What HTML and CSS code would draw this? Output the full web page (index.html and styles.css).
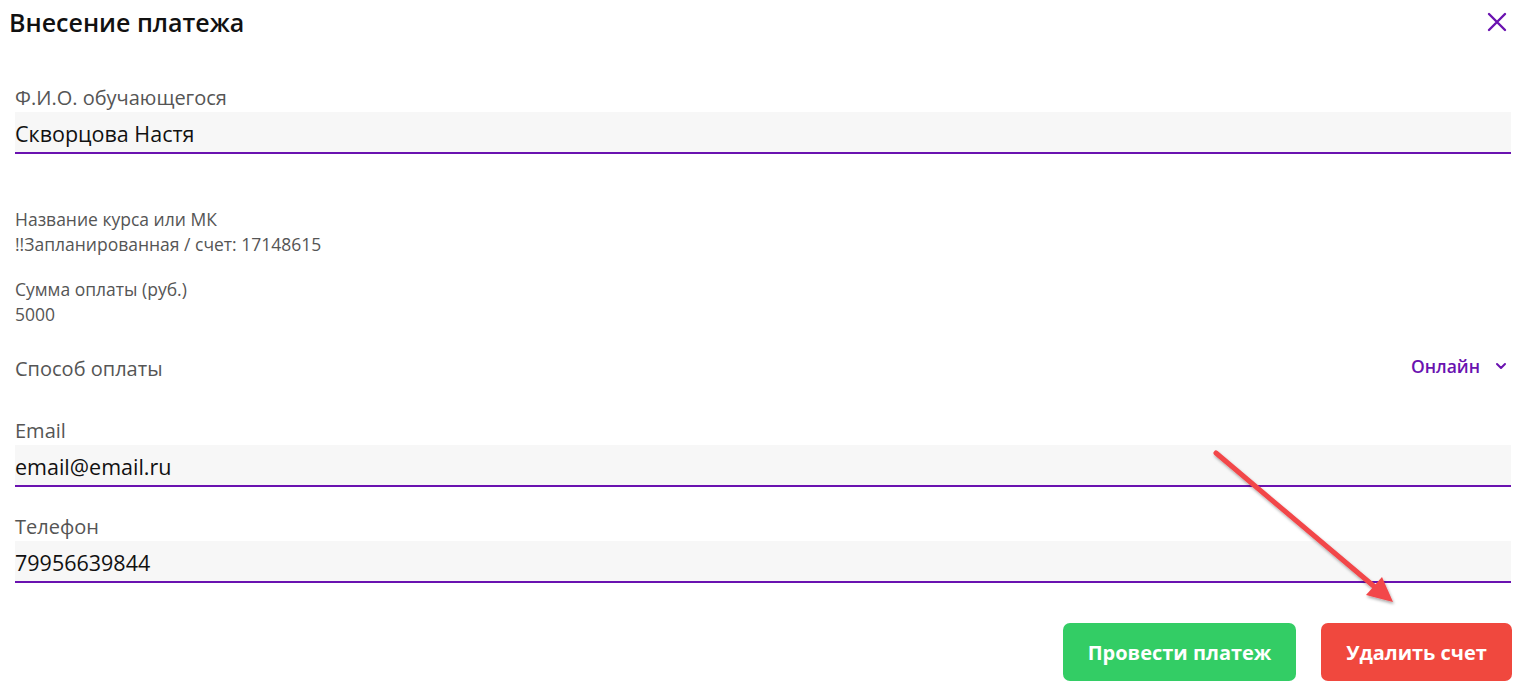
FILE: index.html
```html
<!DOCTYPE html>
<html lang="ru">
<head>
<meta charset="utf-8">
<link rel="stylesheet" href="styles.css">
</head>
<body>
<div class="modal">
  <div class="header">
    <h1 class="title">Внесение платежа</h1>
    <button class="close" aria-label="Закрыть">
      <svg width="20" height="20" viewBox="0 0 20 20"><path d="M2 2 L18 18 M18 2 L2 18" stroke="#6a12b0" stroke-width="2.4" stroke-linecap="round"/></svg>
    </button>
  </div>

  <div class="field first">
    <div class="label">Ф.И.О. обучающегося</div>
    <div class="input">Скворцова Настя</div>
  </div>

  <div class="info">
    <div class="info-label">Название курса или МК</div>
    <div class="info-value">!!Запланированная / счет: 17148615</div>
  </div>
  <div class="info second">
    <div class="info-label">Сумма оплаты (руб.)</div>
    <div class="info-value">5000</div>
  </div>

  <div class="method">
    <div class="label">Способ оплаты</div>
    <div class="select">Онлайн
      <svg width="12" height="8" viewBox="0 0 12 8"><path d="M2 2 L6 6 L10 2" fill="none" stroke="#6a12b0" stroke-width="2" stroke-linecap="round" stroke-linejoin="round"/></svg>
    </div>
  </div>

  <div class="field email">
    <div class="label">Email</div>
    <div class="input">email@email.ru</div>
  </div>
  <div class="field">
    <div class="label">Телефон</div>
    <div class="input">79956639844</div>
  </div>

  <div class="actions">
    <button class="btn green">Провести платеж</button>
    <button class="btn red">Удалить счет</button>
  </div>

  <svg class="arrow" width="200" height="170" viewBox="0 0 200 170">
    <defs>
      <filter id="sh" x="-20%" y="-20%" width="140%" height="140%">
        <feDropShadow dx="1" dy="2" stdDeviation="1.5" flood-color="#000" flood-opacity="0.35"/>
      </filter>
    </defs>
    <g filter="url(#sh)">
      <line x1="16" y1="13" x2="176" y2="148" stroke="#f2464a" stroke-width="5" stroke-linecap="round"/>
      <polygon points="193,162 166,155 182,137" fill="#f2464a"/>
    </g>
  </svg>
</div>
</body>
</html>
```
FILE: styles.css
```css
* { box-sizing: border-box; }
body {
  margin: 0;
  background: #fff;
  font-family: "Open Sans", "Noto Sans", sans-serif;
  color: #222;
}
.modal {
  position: relative;
  width: 1527px;
  height: 694px;
  padding: 0 16px 0 15px;
}
.header {
  display: flex;
  justify-content: space-between;
  align-items: center;
  height: 44px;
  margin-left: -6px;
}
.title {
  margin: 0;
  font-size: 25px;
  font-weight: 600;
  color: #111;
  line-height: 44px;
}
.close {
  border: 0;
  background: none;
  padding: 0;
  width: 20px;
  height: 20px;
  margin-right: 4px;
  cursor: pointer;
}
.field { margin-top: 27px; }
.field.first { margin-top: 41px; }
.field.email { margin-top: 36px; }
.label {
  font-size: 20px;
  color: #555;
  line-height: 26px;
}
.input {
  margin-top: 1px;
  height: 42px;
  background: #f7f7f7;
  border-bottom: 2px solid #6a12b0;
  font-size: 21.5px;
  color: #111;
  line-height: 44px;
}
.info {
  margin-top: 53px;
  font-size: 17.5px;
  color: #555;
  line-height: 25px;
}
.info.second { margin-top: 20px; }
.method {
  display: flex;
  justify-content: space-between;
  align-items: center;
  height: 26px;
  margin-top: 29px;
}
.select {
  display: flex;
  align-items: center;
  gap: 15px;
  font-size: 17.5px;
  font-weight: 600;
  color: #6a12b0;
  margin-top: -6px;
  margin-right: 4px;
}
.actions {
  display: flex;
  justify-content: flex-end;
  gap: 25px;
  margin-top: 40px;
  margin-right: -1px;
}
.btn {
  border: 0;
  border-radius: 7px;
  height: 58px;
  color: #fff;
  font-family: "Open Sans", sans-serif;
  font-size: 20px;
  font-weight: 700;
  padding: 0;
}
.green { background: #33cd65; width: 233px; }
.red { background: #f0483e; width: 191px; }
.arrow {
  position: absolute;
  left: 1200px;
  top: 440px;
}
```
